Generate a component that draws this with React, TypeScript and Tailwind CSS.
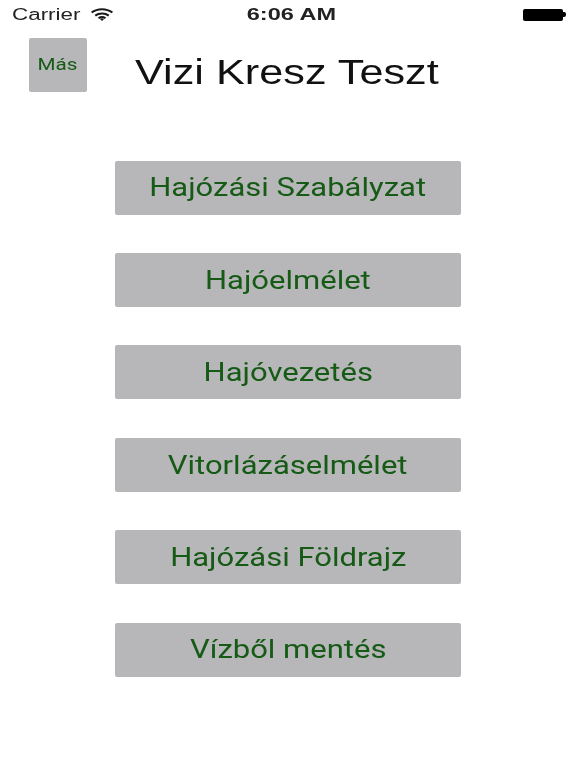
const items = [
  "Hajózási Szabályzat",
  "Hajóelmélet",
  "Hajóvezetés",
  "Vitorlázáselmélet",
  "Hajózási Földrajz",
  "Vízből mentés",
];

function Wifi() {
  return (
    <svg width="24" height="13" viewBox="0 0 22 13" fill="none" stroke="#1a1a1a" strokeWidth="2" preserveAspectRatio="none" className="absolute left-[90px] top-[8px] blur-[0.4px]">
      <path d="M1.5 4.6C6.8 0.2 15.2 0.2 20.5 4.6" />
      <path d="M4.8 7.6C8.2 4.9 13.8 4.9 17.2 7.6" />
      <path d="M7.8 10.2C9.6 8.9 12.4 8.9 14.2 10.2" />
      <path d="M11 13L8.9 10.8C10 10 12 10 13.1 10.8Z" fill="#1a1a1a" stroke="none" />
    </svg>
  );
}

function Battery() {
  return (
    <div className="flex items-center blur-[0.4px]">
      <div className="h-[12px] w-[40px] rounded-[2px] bg-black" />
      <div className="h-[5px] w-[3px] rounded-r-[2px] bg-black" />
    </div>
  );
}

export default function App() {
  return (
    <div className="flex h-[768px] w-[576px] flex-col overflow-hidden bg-white font-['Liberation_Sans',sans-serif]">
      <div className="relative flex h-[28px] items-center justify-between pl-[12px] pr-[10px] pt-[1px] text-[16px] text-[#222]">
        <div className="flex w-[150px] items-center">
          <span className="origin-left scale-x-[1.4] blur-[0.3px]">Carrier</span>
          <Wifi />
        </div>
        <span className="ml-[5px] scale-x-[1.47] font-semibold blur-[0.3px]">6:06 AM</span>
        <div className="flex w-[150px] justify-end">
          <Battery />
        </div>
      </div>

      <div className="mt-[10px] flex h-[54px] items-start pl-[29px]">
        <div className="flex h-[54px] w-[58px] items-center justify-center rounded-[2px] bg-[#b7b6b9] font-['Roboto',sans-serif] text-[16px] text-[#155a15]">
          <span className="mr-[2px] scale-x-[1.29] blur-[0.3px]">Más</span>
        </div>
        <h1 className="ml-[48px] mt-[12px] origin-left scale-x-[1.236] whitespace-nowrap text-[35px] font-normal leading-[44px] text-[#111] blur-[0.3px]">
          Vizi Kresz Teszt
        </h1>
      </div>

      <div className="mt-[68.6px] flex flex-col gap-[38.4px] pl-[115px]">
        {items.map((t) => (
          <button
            key={t}
            className="flex h-[54px] w-[346px] items-center justify-center rounded-[2px] bg-[#b7b6b9] pt-[1px] font-['Roboto',sans-serif] text-[25px] text-[#155a15]"
          >
            <span className="scale-x-[1.24] blur-[0.3px]">{t}</span>
          </button>
        ))}
      </div>
    </div>
  );
}
